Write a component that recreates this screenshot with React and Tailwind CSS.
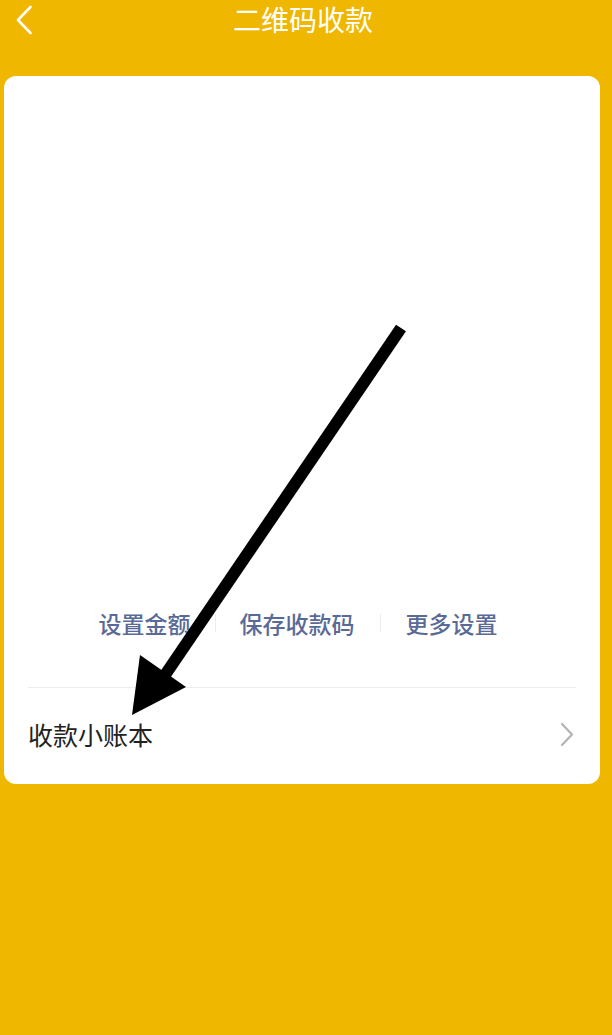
const font = { fontFamily: '"Noto Sans CJK SC", "Noto Sans", sans-serif' };

export default function App() {
  return (
    <div className="relative min-h-[1035px] w-[612px] bg-[#efb700]" style={font}>
      {/* header */}
      <div className="relative flex h-[44px] items-center justify-center pr-[6px]">
        <svg className="absolute left-0 top-0" width="44" height="44" viewBox="0 0 44 44">
          <polyline points="30.5,7 18,20 30.5,33" fill="none" stroke="#fff" strokeWidth="2.6" strokeLinecap="round" strokeLinejoin="round" />
        </svg>
        <h1 className="-mt-[6px] text-[28px] leading-none text-white">二维码收款</h1>
      </div>

      {/* card */}
      <div className="ml-[4px] mr-[12px] mt-[32px] flex h-[708px] flex-col rounded-[12px] bg-white px-[24px]">
        <div className="flex-1" />
        <div className="flex items-center justify-center pb-[47px] text-[23px] font-medium text-[#5a6a96]">
          <span className="ml-[35px]">设置金额</span>
          <span className="mx-[24px] h-[18px] w-px bg-[#ececec]" />
          <span>保存收款码</span>
          <span className="ml-[25px] mr-[25px] h-[18px] w-px bg-[#ececec]" />
          <span>更多设置</span>
          <span className="ml-[43px]" />
        </div>
        <div className="h-px bg-[#ededed]" />
        <div className="flex h-[96px] items-center justify-between pb-[2px]">
          <span className="text-[25px] text-[#222]">收款小账本</span>
          <svg width="16" height="26" viewBox="0 0 16 26">
            <polyline points="2,2 12,12.5 2,23" fill="none" stroke="#b3b3b3" strokeWidth="2.2" strokeLinecap="round" strokeLinejoin="round" />
          </svg>
        </div>
      </div>

      {/* annotation arrow */}
      <svg className="pointer-events-none absolute left-0 top-0" width="612" height="1035">
        <line x1="401" y1="328" x2="165" y2="675" stroke="#000" strokeWidth="12" />
        <polygon points="132,715 140,655 186,687" fill="#000" />
      </svg>
    </div>
  );
}
